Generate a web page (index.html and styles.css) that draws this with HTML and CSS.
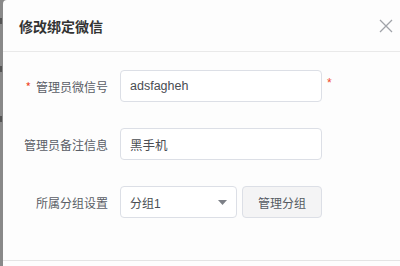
FILE: index.html
```html
<!DOCTYPE html>
<html lang="zh-CN">
<head>
<meta charset="utf-8">
<link rel="stylesheet" href="styles.css">
</head>
<body>
<div class="page">
  <div class="backdrop">
    <span class="mark m1"></span>
    <span class="mark m2"></span>
    <span class="mark m3"></span>
  </div>
  <div class="dialog">
    <div class="dialog-header">
      <span class="dialog-title">修改绑定微信</span>
      <button class="close" aria-label="关闭">
        <svg width="14" height="14" viewBox="0 0 14 14"><path d="M1 1L13 13M13 1L1 13" stroke="#a0a3a9" stroke-width="1.3" fill="none"/></svg>
      </button>
    </div>
    <div class="dialog-body">
      <div class="form-row">
        <label class="form-label"><span class="req">*</span>管理员微信号</label>
        <div class="input">adsfagheh</div>
        <span class="req-after">*</span>
      </div>
      <div class="form-row">
        <label class="form-label">管理员备注信息</label>
        <div class="input">黑手机</div>
      </div>
      <div class="form-row">
        <label class="form-label">所属分组设置</label>
        <div class="select">
          <span>分组1</span>
          <svg class="caret" width="9" height="5" viewBox="0 0 9 5"><path d="M0 0H9L4.5 5Z" fill="#7d8087"/></svg>
        </div>
        <button class="btn">管理分组</button>
      </div>
    </div>
    <div class="dialog-footer"></div>
  </div>
</div>
</body>
</html>
```
FILE: styles.css
```css
html, body {
  margin: 0;
  padding: 0;
  width: 400px;
  height: 266px;
  overflow: hidden;
  background: #898989;
  font-family: "Liberation Sans", "Noto Sans CJK SC", sans-serif;
}
.page {
  display: flex;
  height: 266px;
}
.backdrop {
  width: 3px;
  flex: none;
  background: #898989;
  position: relative;
}
.mark {
  position: absolute;
  left: 0;
  width: 2px;
  height: 6px;
  background: #555;
}
.m1 { top: 18px; }
.m2 { top: 66px; }
.m3 { top: 116px; }
.dialog {
  flex: 1;
  background: #fdfdfd;
  border-top-left-radius: 4px;
  display: flex;
  flex-direction: column;
}
.dialog-header {
  height: 52px;
  border-bottom: 1px solid #e9e9e9;
  display: flex;
  align-items: center;
  justify-content: space-between;
  padding: 0 7px 0 16px;
  box-sizing: border-box;
}
.dialog-title {
  font-size: 14px;
  font-weight: bold;
  color: #333;
}
.close {
  border: none;
  background: none;
  padding: 0;
  width: 14px;
  height: 14px;
  display: flex;
}
.dialog-body {
  padding: 18px 0 0 0;
  display: flex;
  flex-direction: column;
  gap: 26px;
  height: 209px;
  box-sizing: border-box;
  border-bottom: 1px solid #e4e4e4;
}
.form-row {
  display: flex;
  align-items: center;
  height: 32px;
}
.form-label {
  width: 105px;
  flex: none;
  text-align: right;
  font-size: 12px;
  color: #5a5e66;
  margin-right: 12px;
  font-family: "Noto Sans CJK SC", sans-serif;
}
.req {
  color: #f04a2c;
  margin-right: 5px;
}
.input {
  width: 202px;
  height: 32px;
  box-sizing: border-box;
  border: 1px solid #dcdfe6;
  border-radius: 4px;
  background: #fff;
  padding: 0 9px;
  display: flex;
  align-items: center;
  font-size: 12.5px;
  color: #4a4d52;
}
.req-after {
  color: #f04a2c;
  font-size: 12px;
  margin-left: 5px;
  align-self: flex-start;
  margin-top: 6px;
}
.select {
  width: 117px;
  height: 32px;
  box-sizing: border-box;
  border: 1px solid #dcdfe6;
  border-radius: 4px;
  background: #fff;
  padding: 0 9px;
  display: flex;
  align-items: center;
  justify-content: space-between;
  font-size: 12px;
  color: #4a4d52;
}
.btn {
  margin-left: 5px;
  width: 80px;
  height: 32px;
  box-sizing: border-box;
  border: 1px solid #dcdfe6;
  border-radius: 4px;
  background: #f4f4f5;
  font-family: "Noto Sans CJK SC", sans-serif;
  font-size: 12px;
  color: #555a62;
  padding: 0;
}
.dialog-footer {
  flex: 1;
}
```
